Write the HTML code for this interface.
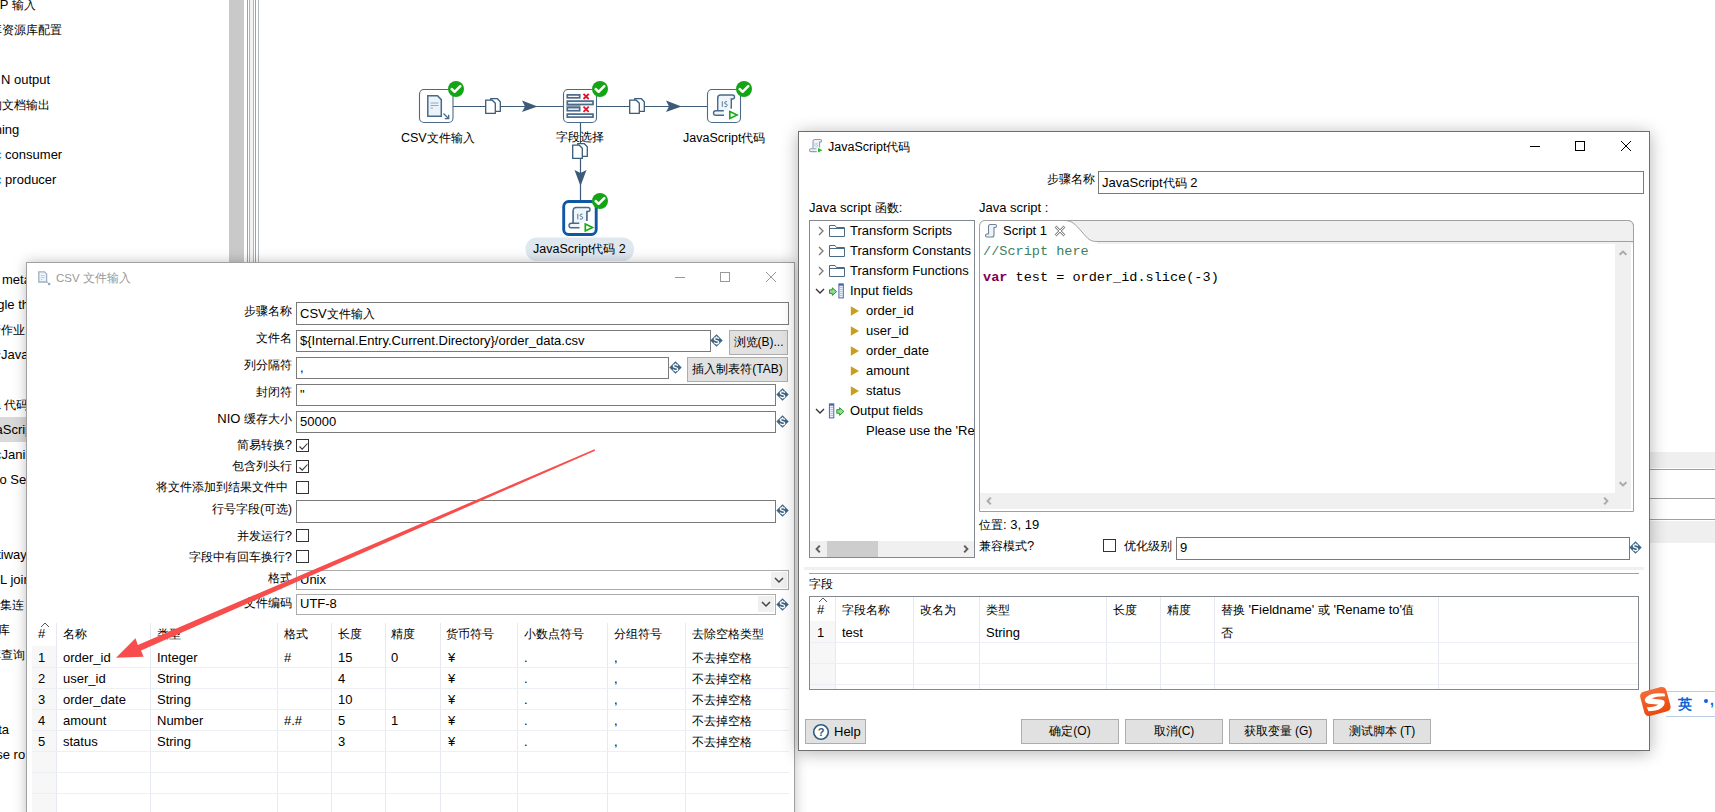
<!DOCTYPE html>
<html><head><meta charset="utf-8">
<style>
*{box-sizing:border-box;margin:0;padding:0}
html,body{width:1715px;height:812px;overflow:hidden;background:#fff;position:relative}
body{font-family:"Liberation Sans",sans-serif;font-size:13px;color:#000}
.a{position:absolute}
.t{position:absolute;white-space:pre;line-height:16px;font-size:13px}
.c{font-size:12px}
.inp{position:absolute;background:#fff;border:1px solid #7a7a7a}
.btn{position:absolute;background:#e1e1e1;border:1px solid #adadad;text-align:center;line-height:22px;font-size:12px}
.cb{position:absolute;width:13px;height:13px;border:1px solid #333;background:#fff}
.vd{position:absolute;width:1px;background:#e6eaf0}
.hd{position:absolute;height:1px;background:#eceff3}
</style></head><body>

<!-- LEFT PANEL -->
<div id="left" class="a" style="left:0;top:0;width:229px;height:812px;overflow:hidden">
<div class="a" style="left:0;top:417px;width:229px;height:25px;background:#d9d9d9"></div>
<div class="t" style="left:-9px;top:-3px">AP <span class="c">输入</span></div>
<div class="t" style="left:-10px;top:22px"><span class="c">库资源库配置</span></div>
<div class="t" style="left:1px;top:72px">N output</div>
<div class="t" style="left:-10px;top:97px"><span class="c">的文档输出</span></div>
<div class="t" style="left:-19px;top:122px">Mining</div>
<div class="t" style="left:-5px;top:147px"><span style="color:#2a8ad4">c</span> consumer</div>
<div class="t" style="left:-5px;top:172px"><span style="color:#2a8ad4">c</span> producer</div>
<div class="t" style="left:2px;top:272px">meta</div>
<div class="t" style="left:-10px;top:297px">ngle th</div>
<div class="t" style="left:-11px;top:322px"><span class="c">行作业</span></div>
<div class="t" style="left:-11px;top:347px"><span class="c">行</span>Java</div>
<div class="t" style="left:-13px;top:397px">va <span class="c">代码</span></div>
<div class="t" style="left:-11px;top:422px">vaScrip</div>
<div class="t" style="left:-5px;top:447px"><span style="color:#2a8ad4">c</span>Janir</div>
<div class="t" style="left:-10px;top:472px">Do Se</div>
<div class="t" style="left:-10px;top:547px">atiway</div>
<div class="t" style="left:-10px;top:572px">QL join</div>
<div class="t" style="left:-12px;top:597px"><span class="c">合集连</span></div>
<div class="t" style="left:-14px;top:622px"><span class="c">据库</span></div>
<div class="t" style="left:-11px;top:647px"><span class="c">库查询</span></div>
<div class="t" style="left:-9px;top:722px">ata</div>
<div class="t" style="left:-11px;top:747px">ase ro</div>
</div>

<!-- splitter -->
<div class="a" style="left:229px;top:0;width:15px;height:812px;background:#c9c9c9"></div>
<div class="a" style="left:247px;top:0;width:1px;height:812px;background:#a0a0a0"></div>
<div class="a" style="left:249px;top:0;width:1px;height:812px;background:#b0b4bc"></div>
<div class="a" style="left:250px;top:0;width:3px;height:812px;background:#f2f2f2"></div>
<div class="a" style="left:253px;top:0;width:1px;height:812px;background:#b0b4bc"></div>
<div class="a" style="left:255px;top:0;width:1px;height:812px;background:#a0a0a0"></div>
<div class="a" style="left:258px;top:0;width:1px;height:812px;background:#b0b4bc"></div>

<!-- CANVAS -->
<div id="canvas">
<svg class="a" style="left:0;top:0" width="800" height="262" viewBox="0 0 800 262">
<defs>
<g id="chk"><circle cx="0" cy="0" r="8" fill="#14a514"/><path d="M-4.3 0 L-1.4 2.8 L4.3 -2.8" stroke="#fff" stroke-width="2.5" fill="none" stroke-linecap="round" stroke-linejoin="round"/></g>
<g id="copy" fill="#fff" stroke="#3b5b7a" stroke-width="1.3">
<path d="M5.8 0.7 H12.3 L15.3 3.7 V13.3 H5.8 Z"/>
<path d="M0.7 2.2 H7.3 L10.3 5.2 V15.3 H0.7 Z"/>
</g>
</defs>
<path d="M453 106.5 H563 M597 106.5 H707 M580.5 123 V200" stroke="#3d5a78" stroke-width="1.2" fill="none"/>
<path d="M522 100.5 L537.5 106.5 L522 112 L525 106.5 Z" fill="#3d5a78"/>
<path d="M666 100.5 L681.5 106.5 L666 112 L669 106.5 Z" fill="#3d5a78"/>
<path d="M574.5 170 L580.5 186 L586.5 170 L580.5 173 Z" fill="#3d5a78"/>
<use href="#copy" x="485" y="98"/>
<use href="#copy" x="629" y="98"/>
<use href="#copy" x="572" y="143"/>
<rect x="419.5" y="89.5" width="33.5" height="33" rx="4.5" fill="#fff" stroke="#4a6a89" stroke-width="1.1"/>
<path d="M427.8 95.8 H437.5 L441.3 99.6 V116.2 H427.8 Z" fill="#eaf2fa" stroke="#4a6a89" stroke-width="1.5"/>
<path d="M430.5 103 H438.5 M430.5 105.5 H438.5 M430.5 108 H433" stroke="#8aa0b4" stroke-width="0.9"/>
<path d="M443.5 113.5 L448.5 118.5 M444.8 118.7 H448.7 V114.8" stroke="#4a6a89" stroke-width="1.3" fill="none"/>
<use href="#chk" x="456" y="89"/>
<rect x="563.5" y="89.5" width="33" height="33" rx="4.5" fill="#fff" stroke="#4a6a89" stroke-width="1.1"/>
<rect x="566.4" y="105.2" width="14" height="1.8" fill="#8aa0b4"/>
<rect x="567.3" y="94.9" width="12.4" height="2.9" fill="#fff" stroke="#4a6a89" stroke-width="1.7"/>
<rect x="567.3" y="101.1" width="25.7" height="3.4" fill="#eef6fc" stroke="#4a6a89" stroke-width="1.7"/>
<rect x="567.3" y="107.6" width="12.4" height="3.1" fill="#fff" stroke="#4a6a89" stroke-width="1.7"/>
<rect x="567.3" y="114.1" width="25.7" height="3" fill="#fff" stroke="#4a6a89" stroke-width="1.7"/>
<path d="M583.5 93.8 L588.7 99 M588.7 93.8 L583.5 99 M583.5 106.6 L588.7 111.8 M588.7 106.6 L583.5 111.8" stroke="#e8102a" stroke-width="1.8"/>
<use href="#chk" x="600" y="89"/>
<rect x="707.5" y="89.5" width="33" height="33" rx="4.5" fill="#fff" stroke="#4a6a89" stroke-width="1.1"/>
<g transform="translate(707 89)">
<path d="M10.7 21.5 V9 Q10.7 6 13.7 6 H25.5 Q27.5 6 27.5 8 Q27.5 10 25.5 10 H24.3 V19.5" fill="#eef5fb" stroke="#4a6a89" stroke-width="1.4"/>
<path d="M10.7 10 V21.5 H20 L24.3 17 V10 Z" fill="#eef5fb"/>
<path d="M10.7 9 V21.5 M24.3 9.8 V19.3" stroke="#4a6a89" stroke-width="1.4" fill="none"/>
<path d="M16.8 21.8 H8.8 Q6.5 21.8 6.5 24 Q6.5 26.2 8.8 26.2 H17" fill="#eef5fb" stroke="#4a6a89" stroke-width="1.4"/>
<path d="M15.3 12.3 V17.8 M20 12.6 Q17.6 12.2 17.6 13.9 Q17.6 15 19 15 Q20.4 15.2 20.2 16.6 Q20 18 17.4 17.6" stroke="#4a6a89" stroke-width="0.9" fill="none"/>
<path d="M22.8 22.5 L30 26 L22.8 29.5 Z" fill="#fff" stroke="#1aab1a" stroke-width="1.7" stroke-linejoin="miter"/>
</g>
<use href="#chk" x="744" y="89"/>
<rect x="563.7" y="201.5" width="32.5" height="33" rx="5" fill="#fff" stroke="#0d57a5" stroke-width="2.9"/>
<g transform="translate(562.5 201.5)">
<path d="M10.7 21.5 V9 Q10.7 6 13.7 6 H25.5 Q27.5 6 27.5 8 Q27.5 10 25.5 10 H24.3 V19.5" fill="#eef5fb" stroke="#4a6a89" stroke-width="1.4"/>
<path d="M10.7 10 V21.5 H20 L24.3 17 V10 Z" fill="#eef5fb"/>
<path d="M10.7 9 V21.5 M24.3 9.8 V19.3" stroke="#4a6a89" stroke-width="1.4" fill="none"/>
<path d="M16.8 21.8 H8.8 Q6.5 21.8 6.5 24 Q6.5 26.2 8.8 26.2 H17" fill="#eef5fb" stroke="#4a6a89" stroke-width="1.4"/>
<path d="M15.3 12.3 V17.8 M20 12.6 Q17.6 12.2 17.6 13.9 Q17.6 15 19 15 Q20.4 15.2 20.2 16.6 Q20 18 17.4 17.6" stroke="#4a6a89" stroke-width="0.9" fill="none"/>
<path d="M22.8 22.5 L30 26 L22.8 29.5 Z" fill="#fff" stroke="#1aab1a" stroke-width="1.7" stroke-linejoin="miter"/>
</g>
<use href="#chk" x="600" y="201"/>
<rect x="525.5" y="237.5" width="108.5" height="23.5" rx="11.5" fill="#dfe7ef"/>
</svg>
<div class="t" style="left:401px;top:130px;font-size:12.5px">CSV<span class="c">文件输入</span></div>
<div class="t" style="left:556px;top:129px"><span class="c">字段选择</span></div>
<div class="t" style="left:683px;top:130px;font-size:12.5px">JavaScript<span class="c">代码</span></div>
<div class="t" style="left:533px;top:241px;font-size:12.5px">JavaScript<span class="c">代码</span> 2</div>
</div>

<!-- RIGHT BACKGROUND -->
<div class="a" style="left:1650px;top:452px;width:65px;height:16px;background:#efefef"></div>
<div class="a" style="left:1650px;top:469px;width:65px;height:1px;background:#a0a0a0"></div>
<div class="a" style="left:1650px;top:498px;width:65px;height:1px;background:#a0a0a0"></div>
<div class="a" style="left:1650px;top:519px;width:65px;height:1px;background:#a0a0a0"></div>
<div class="a" style="left:1650px;top:521px;width:65px;height:22px;background:#efefef"></div>

<!-- CSV DIALOG -->
<div id="csv" class="a" style="left:26px;top:262px;width:769px;height:560px;background:#fff;border:1px solid #a0a0a0;box-shadow:0 0 12px rgba(0,0,0,0.25)">
</div>

<div id="csvc">
<svg class="a" style="left:37px;top:270px" width="15" height="16" viewBox="0 0 15 16"><path d="M1.8 1.8 H7.5 L9.6 3.9 V12 H1.8 Z" fill="#eef3f8" stroke="#9fb1c2" stroke-width="1.3"/><path d="M3.8 5.5 H7.6 M3.8 7.5 H7.6 M3.8 9.5 H5.5" stroke="#b5c3d0" stroke-width="0.8"/><path d="M10.2 12 L12.6 14.4 M11 14.6 H12.8 V12.8" stroke="#7f98ae" stroke-width="1" fill="none"/></svg>
<div class="t" style="left:56px;top:270px;color:#999;font-size:11.5px">CSV <span class="c">文件输入</span></div>
<div class="a" style="left:675px;top:277px;width:10px;height:1px;background:#999"></div>
<div class="a" style="left:720px;top:272px;width:10px;height:10px;border:1px solid #999"></div>
<svg class="a" style="left:765px;top:271px" width="12" height="12"><path d="M1 1 L11 11 M11 1 L1 11" stroke="#999" stroke-width="1"/></svg>
<div class="t" style="left:0;width:292px;text-align:right;top:303px"><span class="c">步骤名称</span></div>
<div class="t" style="left:0;width:292px;text-align:right;top:330px"><span class="c">文件名</span></div>
<div class="t" style="left:0;width:292px;text-align:right;top:357px"><span class="c">列分隔符</span></div>
<div class="t" style="left:0;width:292px;text-align:right;top:384px"><span class="c">封闭符</span></div>
<div class="t" style="left:0;width:292px;text-align:right;top:411px">NIO <span class="c">缓存大小</span></div>
<div class="t" style="left:0;width:292px;text-align:right;top:437px"><span class="c">简易转换</span>?</div>
<div class="t" style="left:0;width:292px;text-align:right;top:458px"><span class="c">包含列头行</span></div>
<div class="t" style="left:0;width:288px;text-align:right;top:479px"><span class="c">将文件添加到结果文件中</span></div>
<div class="t" style="left:0;width:292px;text-align:right;top:501px"><span class="c">行号字段(可选)</span></div>
<div class="t" style="left:0;width:292px;text-align:right;top:527.5px"><span class="c">并发运行</span>?</div>
<div class="t" style="left:0;width:292px;text-align:right;top:548.5px"><span class="c">字段中有回车换行</span>?</div>
<div class="t" style="left:0;width:292px;text-align:right;top:570px"><span class="c">格式</span></div>
<div class="t" style="left:0;width:292px;text-align:right;top:595px"><span class="c">文件编码</span></div>
<div class="inp" style="left:296px;top:302px;width:493px;height:23px"></div>
<div class="t" style="left:300px;top:306px">CSV<span class="c">文件输入</span></div>
<div class="inp" style="left:296px;top:330px;width:415px;height:22px"></div>
<div class="t" style="left:300px;top:333px">${Internal.Entry.Current.Directory}/order_data.csv</div>
<svg class="a" style="left:710px;top:334px" width="13" height="13" viewBox="0 0 13 13"><path d="M6.5 0.3 L12.7 6.5 L6.5 12.7 L0.3 6.5 Z" fill="#3d6586"/><path d="M6.5 2.3 V3.6 M6.5 9.6 V10.7 M8.8 4.7 Q8.3 3.6 6.5 3.6 Q4.3 3.6 4.3 5.1 Q4.3 6.3 6.5 6.6 Q8.7 6.9 8.7 8.2 Q8.7 9.6 6.5 9.6 Q4.6 9.6 4.1 8.5" stroke="#fff" stroke-width="1.25" fill="none"/></svg>
<div class="btn" style="left:729px;top:330px;width:59px;height:25px">浏览(B)...</div>
<div class="inp" style="left:296px;top:357px;width:373px;height:22px"></div>
<div class="t" style="left:300px;top:360px">,</div>
<svg class="a" style="left:669px;top:361px" width="13" height="13" viewBox="0 0 13 13"><path d="M6.5 0.3 L12.7 6.5 L6.5 12.7 L0.3 6.5 Z" fill="#3d6586"/><path d="M6.5 2.3 V3.6 M6.5 9.6 V10.7 M8.8 4.7 Q8.3 3.6 6.5 3.6 Q4.3 3.6 4.3 5.1 Q4.3 6.3 6.5 6.6 Q8.7 6.9 8.7 8.2 Q8.7 9.6 6.5 9.6 Q4.6 9.6 4.1 8.5" stroke="#fff" stroke-width="1.25" fill="none"/></svg>
<div class="btn" style="left:687px;top:357px;width:101px;height:25px">插入制表符(TAB)</div>
<div class="inp" style="left:296px;top:384px;width:480px;height:22px"></div>
<div class="t" style="left:300px;top:387px">"</div>
<svg class="a" style="left:776px;top:388px" width="13" height="13" viewBox="0 0 13 13"><path d="M6.5 0.3 L12.7 6.5 L6.5 12.7 L0.3 6.5 Z" fill="#3d6586"/><path d="M6.5 2.3 V3.6 M6.5 9.6 V10.7 M8.8 4.7 Q8.3 3.6 6.5 3.6 Q4.3 3.6 4.3 5.1 Q4.3 6.3 6.5 6.6 Q8.7 6.9 8.7 8.2 Q8.7 9.6 6.5 9.6 Q4.6 9.6 4.1 8.5" stroke="#fff" stroke-width="1.25" fill="none"/></svg>
<div class="inp" style="left:296px;top:411px;width:480px;height:22px"></div>
<div class="t" style="left:300px;top:414px">50000</div>
<svg class="a" style="left:776px;top:415px" width="13" height="13" viewBox="0 0 13 13"><path d="M6.5 0.3 L12.7 6.5 L6.5 12.7 L0.3 6.5 Z" fill="#3d6586"/><path d="M6.5 2.3 V3.6 M6.5 9.6 V10.7 M8.8 4.7 Q8.3 3.6 6.5 3.6 Q4.3 3.6 4.3 5.1 Q4.3 6.3 6.5 6.6 Q8.7 6.9 8.7 8.2 Q8.7 9.6 6.5 9.6 Q4.6 9.6 4.1 8.5" stroke="#fff" stroke-width="1.25" fill="none"/></svg>
<div class="cb" style="left:296px;top:439px"><svg class="a" style="left:0;top:0" width="13" height="13"><path d="M2.5 6.5 L5.2 9.2 L10.5 3.5" stroke="#333" stroke-width="1.1" fill="none"/></svg></div>
<div class="cb" style="left:296px;top:460px"><svg class="a" style="left:0;top:0" width="13" height="13"><path d="M2.5 6.5 L5.2 9.2 L10.5 3.5" stroke="#333" stroke-width="1.1" fill="none"/></svg></div>
<div class="cb" style="left:296px;top:481px"></div>
<div class="inp" style="left:296px;top:500px;width:480px;height:23px"></div>
<svg class="a" style="left:776px;top:504px" width="13" height="13" viewBox="0 0 13 13"><path d="M6.5 0.3 L12.7 6.5 L6.5 12.7 L0.3 6.5 Z" fill="#3d6586"/><path d="M6.5 2.3 V3.6 M6.5 9.6 V10.7 M8.8 4.7 Q8.3 3.6 6.5 3.6 Q4.3 3.6 4.3 5.1 Q4.3 6.3 6.5 6.6 Q8.7 6.9 8.7 8.2 Q8.7 9.6 6.5 9.6 Q4.6 9.6 4.1 8.5" stroke="#fff" stroke-width="1.25" fill="none"/></svg>
<div class="cb" style="left:296px;top:529px"></div>
<div class="cb" style="left:296px;top:550px"></div>
<div class="inp" style="left:296px;top:570px;width:493px;height:20px;border-color:#acacac"></div>
<div class="t" style="left:300px;top:572px">Unix</div>
<div class="a" style="left:771px;top:572px;width:16px;height:16px;background:#f0f0f0"><svg width="16" height="16"><path d="M4 6 L8 10 L12 6" stroke="#444" stroke-width="1.5" fill="none"/></svg></div>
<div class="inp" style="left:296px;top:594px;width:480px;height:21px;border-color:#acacac"></div>
<div class="t" style="left:300px;top:596px">UTF-8</div>
<div class="a" style="left:758px;top:596px;width:16px;height:16px;background:#f0f0f0"><svg width="16" height="16"><path d="M4 6 L8 10 L12 6" stroke="#444" stroke-width="1.5" fill="none"/></svg></div>
<svg class="a" style="left:776px;top:598px" width="13" height="13" viewBox="0 0 13 13"><path d="M6.5 0.3 L12.7 6.5 L6.5 12.7 L0.3 6.5 Z" fill="#3d6586"/><path d="M6.5 2.3 V3.6 M6.5 9.6 V10.7 M8.8 4.7 Q8.3 3.6 6.5 3.6 Q4.3 3.6 4.3 5.1 Q4.3 6.3 6.5 6.6 Q8.7 6.9 8.7 8.2 Q8.7 9.6 6.5 9.6 Q4.6 9.6 4.1 8.5" stroke="#fff" stroke-width="1.25" fill="none"/></svg>
<div class="a" style="left:32px;top:646px;width:24px;height:170px;background:#f7f7f7"></div>
<div class="vd" style="left:56px;top:623px;height:200px"></div>
<div class="vd" style="left:150px;top:623px;height:200px"></div>
<div class="vd" style="left:277px;top:623px;height:200px"></div>
<div class="vd" style="left:331px;top:623px;height:200px"></div>
<div class="vd" style="left:385px;top:623px;height:200px"></div>
<div class="vd" style="left:440px;top:623px;height:200px"></div>
<div class="vd" style="left:517px;top:623px;height:200px"></div>
<div class="vd" style="left:607px;top:623px;height:200px"></div>
<div class="vd" style="left:685px;top:623px;height:200px"></div>
<div class="hd" style="left:32px;top:667px;width:757px"></div>
<div class="hd" style="left:32px;top:688px;width:757px"></div>
<div class="hd" style="left:32px;top:709px;width:757px"></div>
<div class="hd" style="left:32px;top:730px;width:757px"></div>
<div class="hd" style="left:32px;top:751px;width:757px"></div>
<div class="hd" style="left:32px;top:772px;width:757px"></div>
<div class="hd" style="left:32px;top:793px;width:757px"></div>
<div class="hd" style="left:32px;top:814px;width:757px"></div>
<div class="t" style="left:38px;top:626px">#</div>
<div class="t" style="left:63px;top:626px"><span class="c">名称</span></div>
<div class="t" style="left:157px;top:626px"><span class="c">类型</span></div>
<div class="t" style="left:284px;top:626px"><span class="c">格式</span></div>
<div class="t" style="left:338px;top:626px"><span class="c">长度</span></div>
<div class="t" style="left:391px;top:626px"><span class="c">精度</span></div>
<div class="t" style="left:446px;top:626px"><span class="c">货币符号</span></div>
<div class="t" style="left:524px;top:626px"><span class="c">小数点符号</span></div>
<div class="t" style="left:614px;top:626px"><span class="c">分组符号</span></div>
<div class="t" style="left:692px;top:626px"><span class="c">去除空格类型</span></div>
<svg class="a" style="left:40px;top:622px" width="10" height="6"><path d="M1 5 L5 1 L9 5" stroke="#555" stroke-width="1" fill="none"/></svg>
<div class="t" style="left:38px;top:650px">1</div>
<div class="t" style="left:63px;top:650px">order_id</div>
<div class="t" style="left:157px;top:650px">Integer</div>
<div class="t" style="left:284px;top:650px">#</div>
<div class="t" style="left:338px;top:650px">15</div>
<div class="t" style="left:391px;top:650px">0</div>
<div class="t" style="left:448px;top:650px">¥</div>
<div class="t" style="left:524px;top:650px">.</div>
<div class="t" style="left:614px;top:650px">,</div>
<div class="t" style="left:692px;top:650px"><span class="c">不去掉空格</span></div>
<div class="t" style="left:38px;top:671px">2</div>
<div class="t" style="left:63px;top:671px">user_id</div>
<div class="t" style="left:157px;top:671px">String</div>
<div class="t" style="left:338px;top:671px">4</div>
<div class="t" style="left:448px;top:671px">¥</div>
<div class="t" style="left:524px;top:671px">.</div>
<div class="t" style="left:614px;top:671px">,</div>
<div class="t" style="left:692px;top:671px"><span class="c">不去掉空格</span></div>
<div class="t" style="left:38px;top:692px">3</div>
<div class="t" style="left:63px;top:692px">order_date</div>
<div class="t" style="left:157px;top:692px">String</div>
<div class="t" style="left:338px;top:692px">10</div>
<div class="t" style="left:448px;top:692px">¥</div>
<div class="t" style="left:524px;top:692px">.</div>
<div class="t" style="left:614px;top:692px">,</div>
<div class="t" style="left:692px;top:692px"><span class="c">不去掉空格</span></div>
<div class="t" style="left:38px;top:713px">4</div>
<div class="t" style="left:63px;top:713px">amount</div>
<div class="t" style="left:157px;top:713px">Number</div>
<div class="t" style="left:284px;top:713px">#.#</div>
<div class="t" style="left:338px;top:713px">5</div>
<div class="t" style="left:391px;top:713px">1</div>
<div class="t" style="left:448px;top:713px">¥</div>
<div class="t" style="left:524px;top:713px">.</div>
<div class="t" style="left:614px;top:713px">,</div>
<div class="t" style="left:692px;top:713px"><span class="c">不去掉空格</span></div>
<div class="t" style="left:38px;top:734px">5</div>
<div class="t" style="left:63px;top:734px">status</div>
<div class="t" style="left:157px;top:734px">String</div>
<div class="t" style="left:338px;top:734px">3</div>
<div class="t" style="left:448px;top:734px">¥</div>
<div class="t" style="left:524px;top:734px">.</div>
<div class="t" style="left:614px;top:734px">,</div>
<div class="t" style="left:692px;top:734px"><span class="c">不去掉空格</span></div>
</div>
<!-- JS DIALOG -->
<div id="js" class="a" style="left:798px;top:131px;width:852px;height:620px;background:#fff;border:1px solid #6e6e6e;box-shadow:0 2px 16px rgba(0,0,0,0.3)">
</div>

<div id="jsc">
<svg class="a" style="left:808px;top:138px" width="16" height="15" viewBox="0 0 16 15"><path d="M5 10.5 V3.5 Q5 1.5 7 1.5 H12.3 Q13.6 1.5 13.6 2.8 Q13.6 4.1 12.3 4.1 H11.6 V9.5" fill="#eef3f8" stroke="#8ba0b4" stroke-width="1.1"/><path d="M8.5 10.8 H3 Q1.5 10.8 1.5 12.2 Q1.5 13.6 3 13.6 H8.8" fill="#eef3f8" stroke="#8ba0b4" stroke-width="1.1"/><path d="M7 5 V8.5 M9.6 5.2 Q8.4 5 8.4 6 Q8.4 6.7 9.2 6.8 Q10 7 9.8 7.9 Q9.6 8.7 8.2 8.5" stroke="#9aabbc" stroke-width="0.6" fill="none"/><path d="M10 10 L14.5 12.3 L10 14.6 Z" fill="#2db52d"/></svg>
<div class="t" style="left:828px;top:139px;font-size:12.5px">JavaScript<span class="c">代码</span></div>
<div class="a" style="left:1530px;top:146px;width:10px;height:1px;background:#000"></div>
<div class="a" style="left:1575px;top:141px;width:10px;height:10px;border:1px solid #000"></div>
<svg class="a" style="left:1620px;top:140px" width="12" height="12"><path d="M1 1 L11 11 M11 1 L1 11" stroke="#000" stroke-width="1"/></svg>
<div class="t" style="left:900px;width:195px;text-align:right;top:171px"><span class="c">步骤名称</span></div>
<div class="inp" style="left:1098px;top:171px;width:546px;height:23px"></div>
<div class="t" style="left:1102px;top:175px">JavaScript<span class="c">代码</span> 2</div>
<div class="t" style="left:809px;top:200px">Java script <span class="c">函数</span>:</div>
<div class="t" style="left:979px;top:200px">Java script :</div>
<div class="inp" style="left:809px;top:220px;width:166px;height:338px;border-color:#828790"></div>
<svg class="a" style="left:817px;top:225.5px" width="8" height="10"><path d="M2 1 L6 5 L2 9" stroke="#777" stroke-width="1.3" fill="none"/></svg>
<svg class="a" style="left:829px;top:223.5px" width="17" height="14"><path d="M0.5 1.5 H6 L7.5 3.5 H15.5 V12.5 H0.5 Z M0.5 4.5 H15.5" fill="#fff" stroke="#4a6a89" stroke-width="1"/></svg>
<div class="t" style="left:850px;top:222.5px">Transform Scripts</div>
<svg class="a" style="left:817px;top:245.5px" width="8" height="10"><path d="M2 1 L6 5 L2 9" stroke="#777" stroke-width="1.3" fill="none"/></svg>
<svg class="a" style="left:829px;top:243.5px" width="17" height="14"><path d="M0.5 1.5 H6 L7.5 3.5 H15.5 V12.5 H0.5 Z M0.5 4.5 H15.5" fill="#fff" stroke="#4a6a89" stroke-width="1"/></svg>
<div class="t" style="left:850px;top:242.5px">Transform Constants</div>
<svg class="a" style="left:817px;top:265.5px" width="8" height="10"><path d="M2 1 L6 5 L2 9" stroke="#777" stroke-width="1.3" fill="none"/></svg>
<svg class="a" style="left:829px;top:263.5px" width="17" height="14"><path d="M0.5 1.5 H6 L7.5 3.5 H15.5 V12.5 H0.5 Z M0.5 4.5 H15.5" fill="#fff" stroke="#4a6a89" stroke-width="1"/></svg>
<div class="t" style="left:850px;top:262.5px">Transform Functions</div>
<svg class="a" style="left:815px;top:286.5px" width="10" height="8"><path d="M1 2 L5 6 L9 2" stroke="#333" stroke-width="1.3" fill="none"/></svg>
<svg class="a" style="left:828px;top:283px" width="18" height="16"><path d="M1.5 6.8 H4.3 V4.8 L8.6 8.6 L4.3 12.4 V10.4 H1.5 Z" fill="#8fdc8f" stroke="#259a25" stroke-width="1"/><rect x="10.9" y="0.9" width="4.4" height="14" fill="#eef2fa" stroke="#4866ac" stroke-width="1"/><rect x="10.9" y="0.9" width="4.4" height="1.8" fill="#4866ac"/><path d="M11.8 4.5 H14.4 M11.8 6.5 H14.4 M11.8 8.5 H14.4 M11.8 10.5 H14.4 M11.8 12.5 H14.4" stroke="#9fb0d8" stroke-width="0.8"/></svg>
<div class="t" style="left:850px;top:282.5px">Input fields</div>
<svg class="a" style="left:850px;top:304.5px" width="10" height="12"><path d="M0.8 1.2 L9 6 L0.8 10.8 Z" fill="#c89e1c"/></svg>
<div class="t" style="left:866px;top:302.5px">order_id</div>
<svg class="a" style="left:850px;top:324.5px" width="10" height="12"><path d="M0.8 1.2 L9 6 L0.8 10.8 Z" fill="#c89e1c"/></svg>
<div class="t" style="left:866px;top:322.5px">user_id</div>
<svg class="a" style="left:850px;top:344.5px" width="10" height="12"><path d="M0.8 1.2 L9 6 L0.8 10.8 Z" fill="#c89e1c"/></svg>
<div class="t" style="left:866px;top:342.5px">order_date</div>
<svg class="a" style="left:850px;top:364.5px" width="10" height="12"><path d="M0.8 1.2 L9 6 L0.8 10.8 Z" fill="#c89e1c"/></svg>
<div class="t" style="left:866px;top:362.5px">amount</div>
<svg class="a" style="left:850px;top:384.5px" width="10" height="12"><path d="M0.8 1.2 L9 6 L0.8 10.8 Z" fill="#c89e1c"/></svg>
<div class="t" style="left:866px;top:382.5px">status</div>
<svg class="a" style="left:815px;top:406.5px" width="10" height="8"><path d="M1 2 L5 6 L9 2" stroke="#333" stroke-width="1.3" fill="none"/></svg>
<svg class="a" style="left:828px;top:403px" width="18" height="16"><rect x="1.4" y="0.9" width="4.4" height="14" fill="#eef2fa" stroke="#4866ac" stroke-width="1"/><rect x="1.4" y="0.9" width="4.4" height="1.8" fill="#4866ac"/><path d="M2.3 4.5 H4.9 M2.3 6.5 H4.9 M2.3 8.5 H4.9 M2.3 10.5 H4.9 M2.3 12.5 H4.9" stroke="#9fb0d8" stroke-width="0.8"/><path d="M8.8 6.7 H11.6 V4.7 L15.9 8.5 L11.6 12.3 V10.3 H8.8 Z" fill="#8fdc8f" stroke="#259a25" stroke-width="1"/></svg>
<div class="t" style="left:850px;top:402.5px">Output fields</div>
<div class="a" style="left:866px;top:423px;width:108px;height:18px;overflow:hidden"><div class="t" style="left:0;top:0">Please use the 'Replace'</div></div>
<div class="a" style="left:810px;top:541px;width:164px;height:16px;background:#f0f0f0"></div>
<div class="a" style="left:827px;top:541px;width:51px;height:16px;background:#cdcdcd"></div>
<svg class="a" style="left:813px;top:543px" width="10" height="12"><path d="M6.8 2.6 L3.6 6 L6.8 9.4" stroke="#606060" stroke-width="2" fill="none"/></svg>
<svg class="a" style="left:961px;top:543px" width="10" height="12"><path d="M3.2 2.6 L6.4 6 L3.2 9.4" stroke="#606060" stroke-width="2" fill="none"/></svg>
<div class="a" style="left:979px;top:220px;width:655px;height:292px;border:1px solid #a0a0a0;border-radius:7px 7px 0 0;background:#fff"></div>
<svg class="a" style="left:979px;top:220px" width="656" height="24">
<path d="M0.5 24 V6.5 Q0.5 0.5 6.5 0.5 H648.5 Q654.5 0.5 654.5 6.5 V24 Z" fill="#f0f0f0"/>
<path d="M0.5 24 V6.5 Q0.5 0.5 6.5 0.5 H85 C93 0.5 96 4 103 12 C109 19 111 21.5 118 21.5 V24 Z" fill="#fff"/>
<path d="M0.5 24 V6.5 Q0.5 0.5 6.5 0.5 H648.5 Q654.5 0.5 654.5 6.5 V24" fill="none" stroke="#a0a0a0"/>
<path d="M85 0.5 C93 0.5 96 4 103 12 C109 19 111 21.5 118 21.5 H654.5" fill="none" stroke="#a0a0a0"/>
</svg>
<svg class="a" style="left:984px;top:223px" width="14" height="16"><path d="M4.5 11.5 V3.5 Q4.5 1.5 6.5 1.5 H11 Q12.5 1.5 12.5 3 Q12.5 4.5 11 4.5 H10 V12 Q10 14 8 14 H3 Q1.5 14 1.5 12.5 Q1.5 11 3 11 H5" fill="#eef3f8" stroke="#6d8298" stroke-width="1.1"/></svg>
<div class="t" style="left:1003px;top:223px">Script 1</div>
<svg class="a" style="left:1054px;top:225px" width="12" height="12"><path d="M1.5 1.5 L10.5 10.5 M10.5 1.5 L1.5 10.5" stroke="#888" stroke-width="2.6"/><path d="M1.5 1.5 L10.5 10.5 M10.5 1.5 L1.5 10.5" stroke="#fff" stroke-width="1"/></svg>
<div class="t" style="left:983px;top:244px;font-family:'Liberation Mono',monospace;font-size:13.55px;color:#3f7f5f">//Script here</div>
<div class="t" style="left:983px;top:270px;font-family:'Liberation Mono',monospace;font-size:13.55px"><b style="color:#7f0055">var</b> test = order_id.slice(-3)</div>
<div class="a" style="left:1615px;top:244px;width:16px;height:249px;background:#f0f0f0"></div>
<svg class="a" style="left:1617px;top:248px" width="12" height="10"><path d="M2.6 6.8 L6 3.6 L9.4 6.8" stroke="#aaa" stroke-width="2" fill="none"/></svg>
<svg class="a" style="left:1617px;top:479px" width="12" height="10"><path d="M2.6 3.2 L6 6.4 L9.4 3.2" stroke="#aaa" stroke-width="2" fill="none"/></svg>
<div class="a" style="left:980px;top:493px;width:651px;height:16px;background:#f0f0f0"></div>
<svg class="a" style="left:984px;top:495px" width="10" height="12"><path d="M6.8 2.6 L3.6 6 L6.8 9.4" stroke="#aaa" stroke-width="2" fill="none"/></svg>
<svg class="a" style="left:1601px;top:495px" width="10" height="12"><path d="M3.2 2.6 L6.4 6 L3.2 9.4" stroke="#aaa" stroke-width="2" fill="none"/></svg>
<div class="t" style="left:979px;top:517px"><span class="c">位置</span>: 3, 19</div>
<div class="t" style="left:979px;top:538px"><span class="c">兼容模式</span>?</div>
<div class="cb" style="left:1103px;top:539px"></div>
<div class="t" style="left:1124px;top:538px"><span class="c">优化级别</span></div>
<div class="inp" style="left:1176px;top:537px;width:454px;height:23px"></div>
<div class="t" style="left:1180px;top:540px">9</div>
<svg class="a" style="left:1629px;top:541px" width="13" height="13" viewBox="0 0 13 13"><path d="M6.5 0.3 L12.7 6.5 L6.5 12.7 L0.3 6.5 Z" fill="#3d6586"/><path d="M6.5 2.3 V3.6 M6.5 9.6 V10.7 M8.8 4.7 Q8.3 3.6 6.5 3.6 Q4.3 3.6 4.3 5.1 Q4.3 6.3 6.5 6.6 Q8.7 6.9 8.7 8.2 Q8.7 9.6 6.5 9.6 Q4.6 9.6 4.1 8.5" stroke="#fff" stroke-width="1.25" fill="none"/></svg>
<div class="a" style="left:804px;top:567px;width:840px;height:3px;background:#f0f0f0"></div>
<div class="a" style="left:809px;top:573px;width:830px;height:1px;background:#a0a0a0"></div>
<div class="t" style="left:809px;top:576px"><span class="c">字段</span></div>
<div class="inp" style="left:809px;top:596px;width:830px;height:94px;border-color:#828790"></div>
<div class="a" style="left:810px;top:621px;width:25px;height:68px;background:#f7f7f7"></div>
<div class="vd" style="left:835px;top:597px;height:92px"></div>
<div class="vd" style="left:913px;top:597px;height:92px"></div>
<div class="vd" style="left:979px;top:597px;height:92px"></div>
<div class="vd" style="left:1106px;top:597px;height:92px"></div>
<div class="vd" style="left:1160px;top:597px;height:92px"></div>
<div class="vd" style="left:1214px;top:597px;height:92px"></div>
<div class="vd" style="left:1438px;top:597px;height:92px"></div>
<div class="hd" style="left:810px;top:642px;width:828px"></div>
<div class="hd" style="left:810px;top:663px;width:828px"></div>
<div class="hd" style="left:810px;top:684px;width:828px"></div>
<svg class="a" style="left:818px;top:597px" width="10" height="6"><path d="M1 5 L5 1 L9 5" stroke="#555" stroke-width="1" fill="none"/></svg>
<div class="t" style="left:817px;top:602px">#</div>
<div class="t" style="left:842px;top:602px"><span class="c">字段名称</span></div>
<div class="t" style="left:920px;top:602px"><span class="c">改名为</span></div>
<div class="t" style="left:986px;top:602px"><span class="c">类型</span></div>
<div class="t" style="left:1113px;top:602px"><span class="c">长度</span></div>
<div class="t" style="left:1167px;top:602px"><span class="c">精度</span></div>
<div class="t" style="left:1221px;top:602px"><span class="c">替换</span> 'Fieldname' <span class="c">或</span> 'Rename to'<span class="c">值</span></div>
<div class="t" style="left:817px;top:625px">1</div>
<div class="t" style="left:842px;top:625px">test</div>
<div class="t" style="left:986px;top:625px">String</div>
<div class="t" style="left:1221px;top:625px"><span class="c">否</span></div>
<div class="btn" style="left:805px;top:719px;width:61px;height:25px;text-align:left;padding-left:28px;font-size:13px;line-height:24px">Help</div>
<svg class="a" style="left:812px;top:723px" width="18" height="18"><circle cx="9" cy="9" r="7.3" fill="#fff" stroke="#2f5b80" stroke-width="1.6"/><text x="9" y="13" text-anchor="middle" font-size="11" font-weight="bold" fill="#2f5b80" font-family="Liberation Sans">?</text></svg>
<div class="btn" style="left:1021px;top:719px;width:98px;height:25px">确定(O)</div>
<div class="btn" style="left:1125px;top:719px;width:98px;height:25px">取消(C)</div>
<div class="btn" style="left:1229px;top:719px;width:98px;height:25px">获取变量 (G)</div>
<div class="btn" style="left:1333px;top:719px;width:98px;height:25px">测试脚本 (T)</div>
</div>
<!-- RED ARROW -->
<svg class="a" style="left:0;top:0" width="800" height="812">
<path d="M594.5 449.3 L137.8 644.9 L135.5 638.3 L116 657.8 L143.6 656.8 L141 650.4 L595.1 450.7 Z" fill="#f84d4d"/>
</svg>
<!-- SOGOU -->
<div class="a" style="left:1666px;top:691px;width:60px;height:26px;background:#fff;border-top:1px solid #b9cde3;border-bottom:1px solid #b9cde3"></div>
<svg class="a" style="left:1636px;top:684px" width="40" height="36">
<defs><linearGradient id="sg" x1="0" y1="0" x2="0" y2="1"><stop offset="0" stop-color="#f46b36"/><stop offset="1" stop-color="#ea4a0e"/></linearGradient></defs>
<g transform="rotate(-15 19.5 18)"><rect x="6" y="5" width="27" height="25" rx="4.5" fill="url(#sg)"/></g>
<path d="M28.5 9.5 Q15 8 9.8 13.5 Q7 18 12.5 19.8 Q19.5 20.3 22.3 20.6 Q18.5 23.5 10.8 23.2 L12.5 27.3 Q24.5 27 28 21.2 Q30.5 16 24 15.6 Q18.5 15.2 15.8 14.6 Q19.5 12.3 29.2 12.3 Z" fill="#fff"/>
</svg>
<div class="t" style="left:1678px;top:696px;color:#0a64d8;font-weight:bold"><span style="font-size:14px">英</span></div>
<div class="a" style="left:1704px;top:699px;width:4px;height:4px;border-radius:2px;background:#0a64d8"></div>
<div class="t" style="left:1710px;top:692px;color:#0a64d8;font-weight:bold;font-size:14px">,</div>
</body></html>
